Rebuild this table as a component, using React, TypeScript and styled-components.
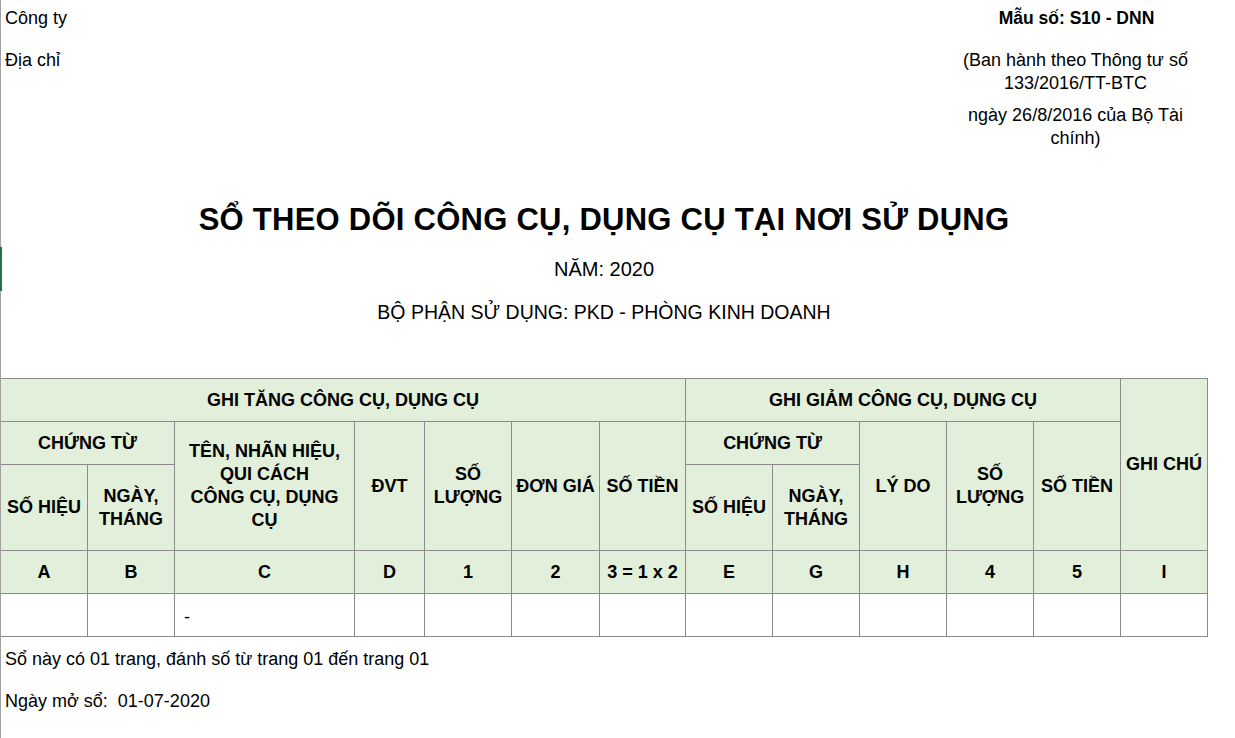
import React from "react";
import styled, { createGlobalStyle } from "styled-components";

const GlobalStyle = createGlobalStyle`
  html, body { margin: 0; padding: 0; background: #ffffff; }
  body { font-family: "Liberation Sans", Arial, sans-serif; color: #000; }
`;

const Page = styled.div`
  position: relative;
  width: 1235px;
  min-height: 738px;
  overflow: hidden;
`;

const EdgeLine = styled.div`
  position: absolute;
  left: 0;
  top: 0;
  bottom: 0;
  width: 1px;
  background: #a0a0a0;
  z-index: 2;
`;

const EdgeMark = styled.div`
  position: absolute;
  left: 0;
  top: 247px;
  height: 44px;
  width: 2px;
  background: #217346;
  z-index: 3;
`;

const Sheet = styled.div`
  width: 1208px;
  display: flex;
  flex-direction: column;
`;

const Header = styled.div`
  display: flex;
  justify-content: space-between;
`;

const LeftInfo = styled.div`
  padding-left: 5px;
  font-size: 18px;
`;

const InfoLine = styled.div<{ $mt: number }>`
  line-height: 23px;
  margin-top: ${(p) => p.$mt}px;
  white-space: pre;
`;

const RightInfo = styled.div`
  width: 261px;
  padding-right: 2px;
  text-align: center;
  font-size: 18px;
`;

const FormCode = styled.div`
  font-size: 17.5px;
  font-weight: bold;
  line-height: 23px;
  margin-top: 7px;
  padding-left: 2px;
`;

const Note = styled.div<{ $mt: number }>`
  line-height: 23px;
  margin-top: ${(p) => p.$mt}px;
`;

const Title = styled.h1`
  margin: 52px 0 0;
  text-align: center;
  font-size: 31px;
  letter-spacing: 0.25px;
  line-height: 36px;
  font-weight: bold;
`;

const SubTitle = styled.div<{ $mt: number; $size: number }>`
  margin-top: ${(p) => p.$mt}px;
  text-align: center;
  font-size: ${(p) => p.$size}px;
  line-height: 23px;
`;

const Table = styled.table`
  margin-top: 54px;
  border-collapse: collapse;
  table-layout: fixed;
  width: 1208px;
  font-size: 18px;
`;

const Cell = styled.td<{ $head?: boolean; $h?: number; $align?: string }>`
  border: 1px solid #8a8a8a;
  background: ${(p) => (p.$head ? "#e2efda" : "#ffffff")};
  font-weight: ${(p) => (p.$head ? "bold" : "normal")};
  text-align: ${(p) => p.$align || "center"};
  vertical-align: middle;
  height: ${(p) => p.$h ?? 43}px;
  padding: ${(p) => (p.$align === "left" ? "4px 0 0 9px" : "0 2px")};
  line-height: 23px;
  box-sizing: border-box;
  overflow: hidden;
`;

const Footer = styled.div`
  padding-left: 5px;
  font-size: 18px;
  margin-top: 11px;
`;

const widths = [87, 87, 180, 70, 87, 88, 86, 87, 87, 87, 87, 87, 87];

const labels = ["A", "B", "C", "D", "1", "2", "3 = 1 x 2", "E", "G", "H", "4", "5", "I"];

export default function App() {
  return (
    <>
      <GlobalStyle />
      <Page>
        <EdgeLine />
        <EdgeMark />
        <Sheet>
          <Header>
            <LeftInfo>
              <InfoLine $mt={7}>Công ty</InfoLine>
              <InfoLine $mt={19}>Địa chỉ</InfoLine>
            </LeftInfo>
            <RightInfo>
              <FormCode>Mẫu số: S10 - DNN</FormCode>
              <Note $mt={19}>
                (Ban hành theo Thông tư số
                <br />
                133/2016/TT-BTC
              </Note>
              <Note $mt={9}>
                ngày 26/8/2016 của Bộ Tài
                <br />
                chính)
              </Note>
            </RightInfo>
          </Header>
          <Title>SỔ THEO DÕI CÔNG CỤ, DỤNG CỤ TẠI NƠI SỬ DỤNG</Title>
          <SubTitle $mt={20} $size={20}>NĂM: 2020</SubTitle>
          <SubTitle $mt={20} $size={19.5}>BỘ PHẬN SỬ DỤNG: PKD - PHÒNG KINH DOANH</SubTitle>
          <Table>
            <colgroup>
              {widths.map((w, i) => (
                <col key={i} style={{ width: w }} />
              ))}
            </colgroup>
            <tbody>
              <tr>
                <Cell as="th" $head colSpan={7}>GHI TĂNG CÔNG CỤ, DỤNG CỤ</Cell>
                <Cell as="th" $head colSpan={5}>GHI GIẢM CÔNG CỤ, DỤNG CỤ</Cell>
                <Cell as="th" $head rowSpan={3}>GHI CHÚ</Cell>
              </tr>
              <tr>
                <Cell as="th" $head colSpan={2}>CHỨNG TỪ</Cell>
                <Cell as="th" $head rowSpan={2}>
                  TÊN, NHÃN HIỆU,
                  <br />
                  QUI CÁCH
                  <br />
                  CÔNG CỤ, DỤNG
                  <br />
                  CỤ
                </Cell>
                <Cell as="th" $head rowSpan={2}>ĐVT</Cell>
                <Cell as="th" $head rowSpan={2}>
                  SỐ
                  <br />
                  LƯỢNG
                </Cell>
                <Cell as="th" $head rowSpan={2}>ĐƠN GIÁ</Cell>
                <Cell as="th" $head rowSpan={2}>SỐ TIỀN</Cell>
                <Cell as="th" $head colSpan={2}>CHỨNG TỪ</Cell>
                <Cell as="th" $head rowSpan={2}>LÝ DO</Cell>
                <Cell as="th" $head rowSpan={2}>
                  SỐ
                  <br />
                  LƯỢNG
                </Cell>
                <Cell as="th" $head rowSpan={2}>SỐ TIỀN</Cell>
              </tr>
              <tr>
                <Cell as="th" $head $h={86}>SỐ HIỆU</Cell>
                <Cell as="th" $head $h={86}>
                  NGÀY,
                  <br />
                  THÁNG
                </Cell>
                <Cell as="th" $head $h={86}>SỐ HIỆU</Cell>
                <Cell as="th" $head $h={86}>
                  NGÀY,
                  <br />
                  THÁNG
                </Cell>
              </tr>
              <tr>
                {labels.map((l, i) => (
                  <Cell as="th" $head key={i}>
                    {l}
                  </Cell>
                ))}
              </tr>
              <tr>
                {labels.map((_, i) => (
                  <Cell key={i} $align={i === 2 ? "left" : "center"}>
                    {i === 2 ? "-" : ""}
                  </Cell>
                ))}
              </tr>
            </tbody>
          </Table>
          <Footer>
            <InfoLine $mt={0}>Sổ này có 01 trang, đánh số từ trang 01 đến trang 01</InfoLine>
            <InfoLine $mt={19}>Ngày mở sổ:  01-07-2020</InfoLine>
          </Footer>
        </Sheet>
      </Page>
    </>
  );
}
